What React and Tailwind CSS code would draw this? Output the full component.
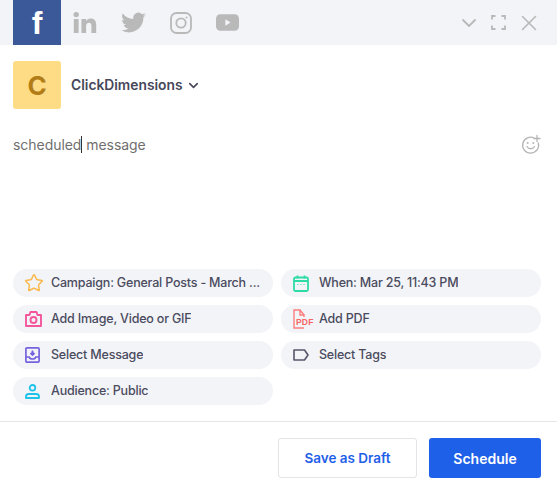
import React from 'react';
import { ChevronDown, X, Star } from 'lucide-react';

const font = "font-['Inter','Liberation_Sans',sans-serif]";

// social network glyphs in the top bar
const Linkedin = () => (
  <svg width="24" height="24" viewBox="0 0 24 24" fill="#b9b9b9">
    <circle cx="3.2" cy="3.6" r="2.7" />
    <rect x="0.8" y="8" width="4.8" height="14" />
    <path d="M8.4 8h4.6v2c.9-1.4 2.5-2.4 4.6-2.4 4 0 5.6 2.5 5.6 6.6V22h-4.8v-7c0-2-.6-3.3-2.3-3.3-1.9 0-3 1.3-3 3.4V22H8.4z" />
  </svg>
);

const Twitter = () => (
  <svg width="25" height="22" viewBox="0 0 24 20" fill="#b9b9b9">
    <path d="M24 2.4c-.9.4-1.8.7-2.8.8 1-.6 1.8-1.6 2.2-2.7-1 .6-2 1-3.1 1.200A4.900 4.900 0 0 0 11.900 6.200C7.800 6 4.200 4 1.700.9c-1.300 2.300-.6 5.100 1.500 6.500-.8 0-1.500-.2-2.200-.6 0 2.300 1.600 4.400 3.900 4.900-.7.2-1.500.2-2.200.1.600 2 2.400 3.400 4.600 3.400A9.900 9.900 0 0 1 0 16.700 14 14 0 0 0 7.500 19c9.100 0 14.300-7.700 14-14.600 1-.7 1.800-1.500 2.500-2z" />
  </svg>
);

const Instagram = () => (
  <svg width="22" height="22" viewBox="0 0 22 22" fill="none" stroke="#b9b9b9" strokeWidth="1.800">
    <rect x="1" y="1" width="20" height="20" rx="5.500" />
    <circle cx="11" cy="11" r="4.700" />
    <circle cx="16.600" cy="5.400" r="1" fill="#b9b9b9" stroke="none" />
  </svg>
);

const Youtube = () => (
  <svg width="23" height="17" viewBox="0 0 24 17">
    <rect width="24" height="17" rx="4.500" fill="#b9b9b9" />
    <path d="M9.800 5.200v6.600l5.400-3.300z" fill="#f3f4f8" />
  </svg>
);

const Expand = () => (
  <svg width="15" height="15" viewBox="0 0 15 15" fill="none" stroke="#b9b9b9" strokeWidth="1.800">
    <path d="M1 4.500V1h3.500M10.500 1H14v3.500M14 10.500V14h-3.500M4.500 14H1v-3.500" />
  </svg>
);

const Smile = () => (
  <svg width="20" height="20" viewBox="0 0 20 20" fill="none" stroke="#b5b5b5" strokeWidth="1.300" strokeLinecap="round">
    <path d="M13.500 3.200A8 8 0 1 0 17.300 8" />
    <path d="M6 11.500c1.500 3 6 3 7.500 0" />
    <circle cx="6.700" cy="8" r="1" fill="#b5b5b5" stroke="none" />
    <circle cx="12.300" cy="8" r="1" fill="#b5b5b5" stroke="none" />
    <path d="M16 0.500v6M13 3.500h6" />
  </svg>
);

const Calendar = () => (
  <svg width="16" height="17" viewBox="0 0 16 17" fill="none" stroke="#2fdba5" strokeWidth="1.800">
    <rect x="1" y="2.500" width="14" height="13.500" rx="1.500" />
    <path d="M1 6h14M4.500 0.500v3M11.500 0.500v3" />
    <path d="M4.500 9.500h1M7.500 9.500h1M10.500 9.500h1" strokeWidth="1.200" />
  </svg>
);

const Camera = () => (
  <svg width="17" height="16" viewBox="0 0 17 16" fill="none" stroke="#f4569b" strokeWidth="1.900">
    <path d="M1 4h3.500L5.500 1h6l1 3H16v11H1z" strokeLinejoin="round" />
    <circle cx="8.500" cy="9" r="3" />
  </svg>
);

const Pdf = () => (
  <div className="relative h-[20px] w-[18px]">
    <svg width="18" height="20" viewBox="0 0 18 20" fill="none" stroke="#fb7e7e" strokeWidth="1.400">
      <path d="M11 9V6H7V1H1v18h10" />
      <path d="M7 1l4 5" />
    </svg>
    <span className="absolute left-[2.500px] top-[8px] bg-[#f3f4f8] px-[0.500px] font-['Liberation_Sans',sans-serif] text-[8.500px] leading-[10px] font-bold tracking-[0.200px] text-[#f76464]">PDF</span>
  </div>
);

const Inbox = () => (
  <svg width="15" height="16" viewBox="0 0 15 16" fill="none" stroke="#7463e0" strokeWidth="1.700">
    <rect x="0.900" y="0.900" width="13.200" height="14.200" rx="1" />
    <path d="M1 10h3.200c.4 1.300 1.700 2 3.300 2s2.900-.7 3.300-2H14" />
    <path d="M7.500 3.500v4M5.500 6l2 2 2-2" strokeWidth="1.900" />
  </svg>
);

const Tag = () => (
  <svg width="16" height="12" viewBox="0 0 16 12" fill="none" stroke="#55566a" strokeWidth="1.600" strokeLinejoin="round">
    <path d="M1 1h10.500L15 6l-3.500 5H1z" />
  </svg>
);

const Person = () => (
  <svg width="15" height="15" viewBox="0 0 15 15" fill="none" stroke="#1ec3ea" strokeWidth="1.800">
    <circle cx="7.500" cy="3.800" r="2.800" />
    <path d="M1 14v-1.500c0-1.500 1.200-2.500 2.800-2.500h7.400c1.600 0 2.800 1 2.800 2.500V14z" strokeLinejoin="round" />
  </svg>
);

const Pill = ({ icon, children }) => (
  <div className="flex h-7 items-center rounded-[14px] bg-[#f3f4f8] pl-[12px]">
    <div className="flex w-[26px] shrink-0 items-center">{icon}</div>
    <span className="truncate text-[12.500px] font-medium tracking-[-0.200px] text-[#4a4b5e]">{children}</span>
  </div>
);

export default function App() {
  return (
    <div className={`flex h-[489px] w-[557px] flex-col overflow-hidden bg-white ${font}`}>
      {/* Network tabs */}
      <div className="flex h-[45px] shrink-0 items-center bg-[#f3f4f8] pl-[13px] pr-[15px]">
        <div className="flex h-full w-12 items-center justify-center bg-[#3b5998] font-['Liberation_Sans',sans-serif] text-[32px] font-bold text-white">f</div>
        <div className="ml-[12px] flex items-center gap-[24px]">
          <Linkedin />
          <Twitter />
          <Instagram />
          <Youtube />
        </div>
        <div className="ml-auto flex items-center gap-[10px]">
          <ChevronDown size={24} color="#b9b9b9" strokeWidth={1.800} />
          <Expand />
          <X size={26} color="#b9b9b9" strokeWidth={1.500} />
        </div>
      </div>

      {/* Account */}
      <div className="mt-4 flex items-center pl-[13px]">
        <div className="flex h-12 w-12 items-center justify-center rounded-[3px] bg-[#fddc85] text-[26px] font-bold text-[#b27c17]">C</div>
        <span className="ml-[10px] text-[13.800px] font-semibold text-[#46475a]">ClickDimensions</span>
        <ChevronDown size={15} color="#46475a" strokeWidth={2.500} className="ml-[3px]" />
      </div>

      {/* Message */}
      <div className="mt-[26px] flex items-start justify-between pl-[13px] pr-[16px]">
        <div className="text-[14px] leading-5 tracking-[-0.050px] text-[#6f6f6f]">
          scheduled<span className="border-l border-[#333]">&nbsp;</span>message
        </div>
        <Smile />
      </div>

      {/* Options */}
      <div className="mt-[114px] grid grid-cols-2 gap-2 pl-[13px] pr-[16px]">
        <Pill icon={<Star size={20} color="#fbb94f" strokeWidth={1.800} className="-ml-[1px]" />}>Campaign: General Posts - March ...</Pill>
        <Pill icon={<Calendar />}>When: Mar 25, 11:43 PM</Pill>
        <Pill icon={<Camera />}>Add Image, Video or GIF</Pill>
        <Pill icon={<Pdf />}>Add PDF</Pill>
        <Pill icon={<Inbox />}>Select Message</Pill>
        <Pill icon={<Tag />}>Select Tags</Pill>
        <Pill icon={<Person />}>Audience: Public</Pill>
      </div>

      {/* Footer */}
      <div className="mt-auto flex h-[68px] shrink-0 items-start justify-end gap-3 border-t border-[#e4e4e7] pr-[16px] pt-4">
        <button className="h-10 w-[139px] rounded-[3px] border border-[#e3e3e8] bg-white text-[13.500px] font-semibold text-[#1f60e8]">Save as Draft</button>
        <button className="h-10 w-[112px] rounded-[3px] bg-[#1f60e8] text-[14px] font-semibold text-white">Schedule</button>
      </div>
    </div>
  );
}
